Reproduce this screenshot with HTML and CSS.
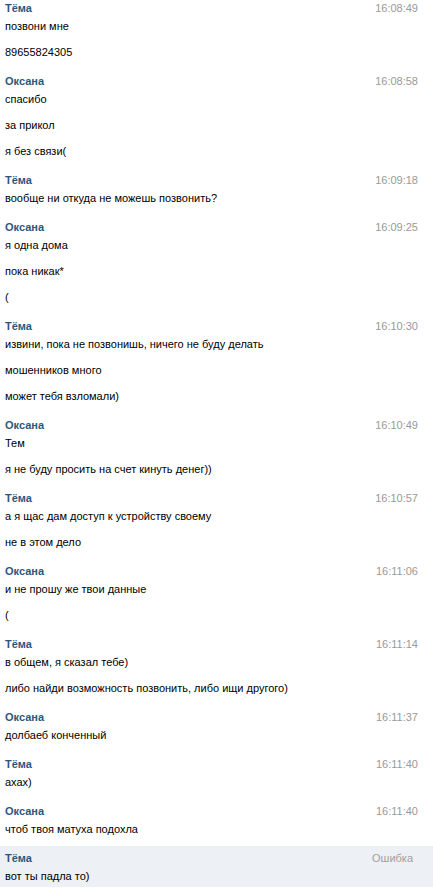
FILE: index.html
```html
<!DOCTYPE html>
<html lang="ru">
<head>
<meta charset="utf-8">
<title>Сообщения</title>
<link rel="stylesheet" href="styles.css">
</head>
<body>
<div class="history">
  <div class="block">
    <div class="head"><span class="name">Тёма</span><span class="date">16:08:49</span></div>
    <div class="msgs"><div class="msg">позвони мне</div><div class="msg">89655824305</div></div>
  </div>
  <div class="block">
    <div class="head"><span class="name">Оксана</span><span class="date">16:08:58</span></div>
    <div class="msgs"><div class="msg">спасибо</div><div class="msg">за прикол</div><div class="msg">я без связи(</div></div>
  </div>
  <div class="block">
    <div class="head"><span class="name">Тёма</span><span class="date">16:09:18</span></div>
    <div class="msgs"><div class="msg">вообще ни откуда не можешь позвонить?</div></div>
  </div>
  <div class="block">
    <div class="head"><span class="name">Оксана</span><span class="date">16:09:25</span></div>
    <div class="msgs"><div class="msg">я одна дома</div><div class="msg">пока никак*</div><div class="msg">(</div></div>
  </div>
  <div class="block">
    <div class="head"><span class="name">Тёма</span><span class="date">16:10:30</span></div>
    <div class="msgs"><div class="msg">извини, пока не позвонишь, ничего не буду делать</div><div class="msg">мошенников много</div><div class="msg">может тебя взломали)</div></div>
  </div>
  <div class="block">
    <div class="head"><span class="name">Оксана</span><span class="date">16:10:49</span></div>
    <div class="msgs"><div class="msg">Тем</div><div class="msg">я не буду просить на счет кинуть денег))</div></div>
  </div>
  <div class="block">
    <div class="head"><span class="name">Тёма</span><span class="date">16:10:57</span></div>
    <div class="msgs"><div class="msg">а я щас дам доступ к устройству своему</div><div class="msg">не в этом дело</div></div>
  </div>
  <div class="block">
    <div class="head"><span class="name">Оксана</span><span class="date">16:11:06</span></div>
    <div class="msgs"><div class="msg">и не прошу же твои данные</div><div class="msg">(</div></div>
  </div>
  <div class="block">
    <div class="head"><span class="name">Тёма</span><span class="date">16:11:14</span></div>
    <div class="msgs"><div class="msg">в общем, я сказал тебе)</div><div class="msg">либо найди возможность позвонить, либо ищи другого)</div></div>
  </div>
  <div class="block">
    <div class="head"><span class="name">Оксана</span><span class="date">16:11:37</span></div>
    <div class="msgs"><div class="msg">долбаеб конченный</div></div>
  </div>
  <div class="block">
    <div class="head"><span class="name">Тёма</span><span class="date">16:11:40</span></div>
    <div class="msgs"><div class="msg">ахах)</div></div>
  </div>
  <div class="block">
    <div class="head"><span class="name">Оксана</span><span class="date">16:11:40</span></div>
    <div class="msgs"><div class="msg">чтоб твоя матуха подохла</div></div>
  </div>
  <div class="block block-error">
    <div class="head"><span class="name">Тёма</span><span class="date date-error">Ошибка</span></div>
    <div class="msgs"><div class="msg">вот ты падла то)</div></div>
  </div>
</div>
</body>
</html>
```
FILE: styles.css
```css
html, body {
  margin: 0;
  padding: 0;
  background: #fff;
}
body {
  font-family: "Liberation Sans", Arial, sans-serif;
  font-size: 11px;
  line-height: 14px;
  color: #000;
}
.history {
  display: flex;
  flex-direction: column;
  gap: 6px;
  margin-top: -4px;
}
.block {
  padding: 5px 15px 4px 5px;
}
.block-error {
  background: #edf1f5;
  padding-right: 20px;
}
.head {
  display: flex;
  justify-content: space-between;
  align-items: baseline;
}
.name {
  font-weight: bold;
  color: #2b587a;
}
.date {
  color: #999;
}
.date-error {
  color: #a0a0a0;
}
.msgs {
  display: flex;
  flex-direction: column;
  gap: 12px;
  margin-top: 4px;
}
```
